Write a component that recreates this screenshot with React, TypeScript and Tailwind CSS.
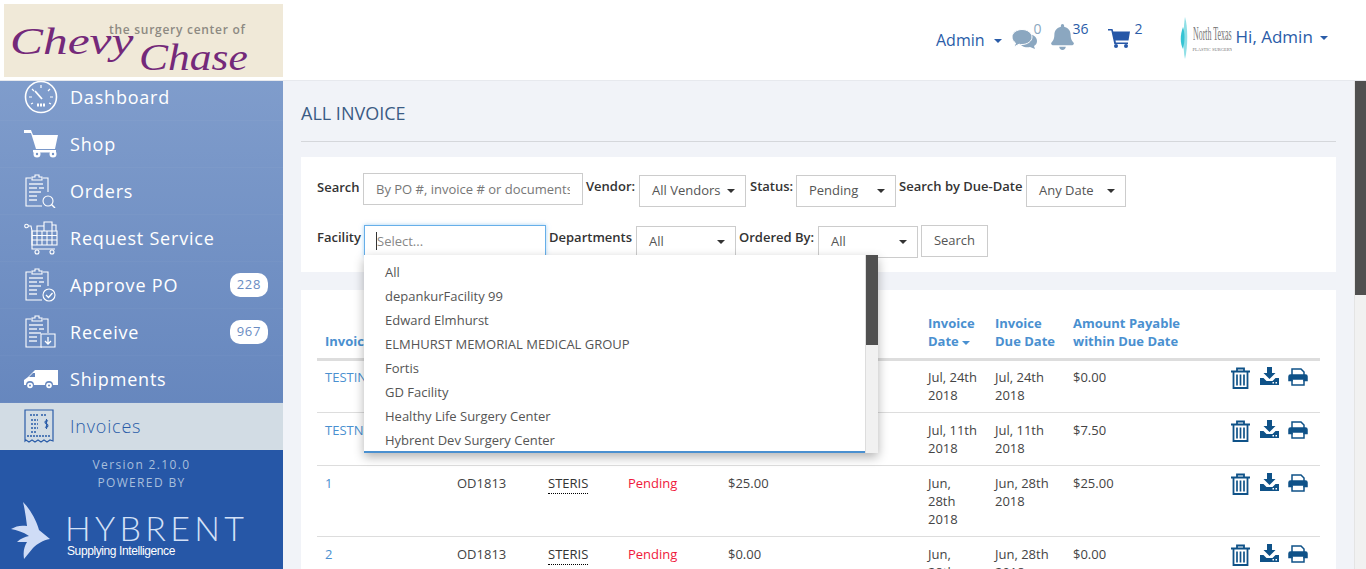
import React from 'react';
import { FaBell } from 'react-icons/fa';

const Caret = ({ className = 'border-t-[#333]' }: { className?: string }) => (
  <span className={`inline-block w-0 h-0 border-x-[4px] border-x-transparent border-t-[4px] ${className}`} />
);

const Clipboard = ({ children }: { children?: React.ReactNode }) => (
  <svg width="32" height="34" viewBox="0 0 32 34" fill="none" stroke="white" strokeWidth="1.1">
    <path d="M7 4H2v28h16M19 4h5v14" />
    <path d="M8 5V3h3V1h4v2h3v3H8z" />
    <path d="M5 10h14M5 14h8M15 14h5M5 18h12M5 22h8M5 26h8" strokeWidth="1.4" opacity="0.85" />
    {children}
  </svg>
);

const icons: Record<string, React.ReactNode> = {
  Dashboard: (
    <svg width="34" height="34" viewBox="0 0 34 34" fill="none" stroke="white">
      <circle cx="17" cy="17" r="15.5" strokeWidth="1.6" />
      <path d="M17 5v3M8 9l2 2M26 9l-2 2M5 17h3M26 17h3M7 24l2-1M27 24l-2-1" strokeWidth="1.2" />
      <path d="M11 11l7 8" strokeWidth="1.8" />
      <path d="M13 25h8" strokeWidth="3" strokeDasharray="2 1" />
    </svg>
  ),
  Shop: (
    <svg width="34" height="28" viewBox="0 0 34 28" fill="white">
      <path d="M0 0h7l2 5h25l-3 14H12L7 3H0z" />
      <path d="M9 20h23v2.500H9z" />
      <circle cx="13" cy="24" r="3.500" />
      <circle cx="29" cy="24" r="3.500" />
      <circle cx="13" cy="24" r="1.200" fill="#7394c7" />
      <circle cx="29" cy="24" r="1.200" fill="#7394c7" />
    </svg>
  ),
  Orders: (
    <Clipboard>
      <circle cx="24" cy="27" r="5" />
      <path d="M27.500 30.500L31 34" strokeWidth="1.4" />
    </Clipboard>
  ),
  'Request Service': (
    <svg width="34" height="34" viewBox="0 0 34 34" fill="none" stroke="white" strokeWidth="1.1">
      <circle cx="2.500" cy="5" r="1.800" />
      <path d="M4 5h3l1 5v18h23" />
      <path d="M8 10h25v14H8zM8 14.500h25M8 19h25M13 10v14M18 10v14M23 10v14M28 10v14" />
      <path d="M13 10V5h7v5M20 8V1h8v9M28 4h4v6" />
      <circle cx="13" cy="31" r="2" />
      <circle cx="28" cy="31" r="2" />
    </svg>
  ),
  'Approve PO': (
    <Clipboard>
      <circle cx="25" cy="27" r="6" fill="#6b8dc2" />
      <path d="M22 27l2.500 2.500 4-4.500" strokeWidth="1.3" />
    </Clipboard>
  ),
  Receive: (
    <Clipboard>
      <path d="M17 19h14v13H17z" fill="#6b8dc2" />
      <path d="M24 22v7M21 26l3 3 3-3" strokeWidth="1.3" />
    </Clipboard>
  ),
  Shipments: (
    <svg width="34" height="20" viewBox="0 0 34 20" fill="white">
      <path d="M11 1h23v15h-5a4 4 0 0 0-8 0H10a4 4 0 0 0-8 0H0v-5l4-3z" />
      <path d="M9 4h2v4H5z" fill="#6687bd" />
      <circle cx="6" cy="16.500" r="2.800" />
      <circle cx="25" cy="16.500" r="2.800" />
      <circle cx="6" cy="16.500" r="1" fill="#6687bd" />
      <circle cx="25" cy="16.500" r="1" fill="#6687bd" />
    </svg>
  ),
  Invoices: (
    <svg width="30" height="34" viewBox="0 0 30 34" fill="none" stroke="#2a5ca8" strokeWidth="1">
      <path d="M1 32V1h28v31l-3-1-3 2-3-2-3 2-3-2-3 2-3-2-3 2-3-2z" strokeWidth="1.200" />
      <path d="M6 6h8M17 6h6M7 11h7M7 15h7M7 19h7M7 23h5M3 27h24" strokeDasharray="2 1" strokeWidth="1.300" />
      <path d="M24 12c-3-1.500-4 2-1.500 3s1.500 4-1.500 3M22.500 10v10" strokeWidth="1.100" />
    </svg>
  ),
};

const menu = [
  { name: 'Dashboard' },
  { name: 'Shop' },
  { name: 'Orders' },
  { name: 'Request Service' },
  { name: 'Approve PO', badge: '228' },
  { name: 'Receive', badge: '967' },
  { name: 'Shipments' },
  { name: 'Invoices', active: true },
];

const facilities = [
  'All',
  'depankurFacility 99',
  'Edward Elmhurst',
  'ELMHURST MEMORIAL MEDICAL GROUP',
  'Fortis',
  'GD Facility',
  'Healthy Life Surgery Center',
  'Hybrent Dev Surgery Center',
];

const rows = [
  { id: 'TESTING', date: ['Jul, 24th', '2018'], due: ['Jul, 24th', '2018'], payable: '$0.00', h: 'h-[53px]', pad: 'pt-[7px]', iconPad: 'pt-[6px]' },
  { id: 'TESTNEW', date: ['Jul, 11th', '2018'], due: ['Jul, 11th', '2018'], payable: '$7.50', h: 'h-[53px]', pad: 'pt-[8px]', iconPad: 'pt-[7px]' },
  { id: '1', po: 'OD1813', vendor: 'STERIS', status: 'Pending', amount: '$25.00', date: ['Jun,', '28th', '2018'], due: ['Jun, 28th', '2018'], payable: '$25.00', h: 'h-[71px]', pad: 'pt-[8px]', iconPad: 'pt-[7px]' },
  { id: '2', po: 'OD1813', vendor: 'STERIS', status: 'Pending', amount: '$0.00', date: ['Jun,', '28th', '2018'], due: ['Jun, 28th', '2018'], payable: '$0.00', h: 'h-[71px]', pad: 'pt-[8px]', iconPad: 'pt-[7px]' },
];

const TrashIcon = () => (
  <svg width="19" height="22" viewBox="0 0 19 22" fill="none" stroke="#0f5288" strokeWidth="1.800">
    <path d="M0 4.500h19M6 4V1.500h7V4M2.500 5v16h14V5" />
    <path d="M6 7.500v11M9.500 7.500v11M13 7.500v11" strokeWidth="1.700" />
  </svg>
);

const DownloadIcon = () => (
  <svg width="19" height="18" viewBox="0 0 19 18" fill="#0f5288">
    <path d="M7 0h5v6h3.500L9.500 12 3.500 6H7z" />
    <path d="M0 11h3.500l3 3h6l3-3H19v7H0z" />
    <rect x="12.500" y="15" width="1.500" height="1.500" fill="white" />
    <rect x="15.500" y="15" width="1.500" height="1.500" fill="white" />
  </svg>
);

const PrintIcon = () => (
  <svg width="20" height="18" viewBox="0 0 20 18" fill="none" stroke="#0f5288" strokeWidth="1.500" className="mt-[1px]">
    <path d="M4 7V1h9l3 3v3" />
    <path d="M4 12v5h12v-5" />
    <path d="M2.500 7h15A1.500 1.500 0 0 1 19 8.500V12.500h-3v-1.500H4v1.500H1V8.500A1.500 1.500 0 0 1 2.500 7z" fill="#0f5288" />
  </svg>
);

const CommentsIcon = () => (
  <svg width="25" height="20" viewBox="0 0 25 20" fill="#8ba7c0">
    <path d="M16 5c5 0 9 3 9 7 0 2-1 4-3 5l1 3-5-2c-5 1-10-1-11-5z" />
    <path d="M10 0.500c5.500 0 10 3.300 10 7.500s-4.500 7.500-10 7.500c-1 0-2 0-3-0.300L2 18l1.500-4C1.500 12.500 0 10.500 0 8 0 3.800 4.500 0.500 10 0.500z" stroke="white" strokeWidth="1" />
  </svg>
);

const CartIcon = () => (
  <svg width="22" height="19" viewBox="0 0 22 19" fill="#2657a7">
    <path d="M0 0h4.500l.8 2.500H22l-1.500 9H7.500l.4 2H20v1.500H6.300L3.300 1.500H0z" />
    <circle cx="8" cy="17" r="2" />
    <circle cx="18" cy="17" r="2" />
  </svg>
);

const Select = ({ label, width }: { label: string; width: string }) => (
  <div className={`${width} h-[32px] border border-[#ccc] flex items-center justify-between pl-[12px] pr-[10px] text-[13px] text-[#555] bg-white whitespace-nowrap`}>
    <span>{label}</span>
    <Caret />
  </div>
);

const App = () => {
  return (
    <div className="w-[1366px] h-[569px] overflow-hidden flex flex-col bg-white text-[13px] text-[#444]" style={{ fontFamily: '"Open Sans", sans-serif' }}>
      <header className="h-[81px] shrink-0 flex items-stretch bg-white border-b border-[#e7e9ee] relative z-10">
        <div className="w-[283px] pl-[4px] pt-[4px]">
          <div className="relative w-[279px] h-[73px] bg-[#f0e9d8] overflow-hidden" style={{ fontFamily: '"Liberation Serif", serif' }}>
            <span className="absolute left-[105px] top-[19px] text-[12px] font-semibold tracking-[0.72px] text-[#8d8a82] leading-[14px] whitespace-nowrap" style={{ fontFamily: '"Open Sans", sans-serif' }}>the surgery center of</span>
            <span className="absolute left-[6px] top-[20px] text-[38px] italic text-[#74297a] leading-[34px] origin-left scale-x-[1.3]">Chevy</span>
            <span className="absolute left-[135px] top-[36px] text-[38px] italic text-[#74297a] leading-[34px] origin-left scale-x-[1.145]">Chase</span>
          </div>
        </div>
        <div className="flex-1 flex items-start text-[#2a5ca8] pl-[653px]">
          <div className="mt-[29px] text-[16px] flex items-center gap-[9px] leading-[22px]">
            Admin <Caret className="border-t-[#2a5ca8] mt-[2px]" />
          </div>
          <div className="relative ml-[10px] mt-[29px]">
            <CommentsIcon />
            <span className="absolute left-[22px] -top-[11px] text-[14px] text-[#8ba7c0]">0</span>
          </div>
          <div className="relative ml-[14px] mt-[24px]">
            <FaBell className="text-[#8ba7c0] w-[23px] h-[26px]" />
            <span className="absolute left-[22px] -top-[6px] text-[14px]">36</span>
          </div>
          <div className="relative ml-[34px] mt-[29px]">
            <CartIcon />
            <span className="absolute left-[27px] -top-[11px] text-[14px]">2</span>
          </div>
          <div className="ml-[50px] mt-[17px] w-[52px] h-[42px] flex items-center gap-[4px] overflow-hidden">
            <svg width="9" height="42" viewBox="0 0 9 42" className="shrink-0">
              <path d="M5 0c3 10 3 30 0 42-2-8-2-30 0-42z" fill="#8fdfe6" />
              <path d="M3 10c2 6 2 14 0 22C0 26 0 18 3 10z" fill="#35c4d4" />
            </svg>
            <div className="w-[39px] text-[#777]" style={{ fontFamily: '"Liberation Serif", serif' }}>
              <div className="text-[18px] leading-[22px] whitespace-nowrap origin-left scale-x-[0.44]">North Texas</div>
              <div className="text-[4.500px] leading-[9px] whitespace-nowrap">PLASTIC SURGERY</div>
            </div>
          </div>
          <div className="ml-[4px] mt-[25px] text-[17px] flex items-center gap-[7px] leading-[24px]">
            Hi, Admin <Caret className="border-t-[#2a5ca8] mt-[2px]" />
          </div>
        </div>
      </header>

      <div className="flex-1 flex min-h-0">
        <aside className="w-[283px] shrink-0 flex flex-col overflow-hidden bg-[#2657a7]">
          <nav className="-mt-[7px] bg-gradient-to-b from-[#809dcc] to-[#6384bc]">
            {menu.map((item) => (
              <div key={item.name} className={`h-[47px] flex items-center ${item.active ? 'bg-[#d2dce4] text-[#2a5ca8] font-light' : 'text-white'} border-b border-white/[0.03]`}>
                <div className="w-[70px] pl-[24px] flex justify-start">{icons[item.name]}</div>
                <span className="flex-1 text-[18px] tracking-[0.8px] leading-none">{item.name}</span>
                {item.badge && (
                  <span className="mr-[15px] w-[38px] h-[24px] rounded-[10px] bg-white text-[#6a8cc2] text-[13px] tracking-[0.8px] flex items-center justify-center">{item.badge}</span>
                )}
              </div>
            ))}
          </nav>
          <div className="flex-1 flex flex-col items-center pt-[6px] text-[#a8bfdc] text-[12px] tracking-[1.35px] leading-[18px]">
            <div>Version 2.10.0</div>
            <div>POWERED BY</div>
            <div className="w-full flex items-start pl-[11px] pt-[10px] text-[#d4e1f7]">
              <svg width="40" height="58" viewBox="0 0 40 58" className="shrink-0">
                <path d="M12 0C20 8 26 20 28 28L39 37C32 38 26 42 22 46L13 57C12 50 13 45 16 40L6 40C10 36 14 35 18 34 12 30 6 28 0 27 5 24 10 23 16 24 15 16 14 8 12 0Z" fill="#cfdcf6" />
              </svg>
              <div className="ml-[16px] mt-[9px]">
                <div className="text-[34px] font-light leading-[34px] tracking-[4.300px] -ml-[2px] whitespace-nowrap" style={{ fontFamily: 'Lato, sans-serif' }}>HYBRENT</div>
                <div className="text-[12px] leading-[12px] -tracking-[0.4px] text-white whitespace-nowrap" style={{ fontFamily: '"Liberation Sans", sans-serif' }}>Supplying Intelligence</div>
              </div>
            </div>
          </div>
        </aside>

        <main className="flex-1 min-w-0 bg-[#f1f3f8] pl-[18px] pr-[18px] overflow-hidden">
          <h1 className="h-[61px] pt-[20px] border-b border-[#d5d7db] text-[18px] leading-[25px] text-[#3b5b84]">ALL INVOICE</h1>

          <section className="mt-[15px] h-[115px] bg-white px-[16px] pt-[16px] relative z-20">
            <div className="flex items-start text-[#333]">
              <label className="w-[46px] font-semibold leading-[28px]">Search</label>
              <div className="w-[220px] h-[32px] border border-[#ccc] px-[12px] text-[#777] leading-[30px]">
                <div className="overflow-hidden whitespace-nowrap">By PO #, invoice # or documents</div>
              </div>
              <label className="ml-[3px] w-[53px] font-semibold leading-[26px]">Vendor:</label>
              <div className="mt-[2px]"><Select label="All Vendors" width="w-[107px]" /></div>
              <label className="ml-[4px] w-[46px] font-semibold leading-[26px]">Status:</label>
              <div className="mt-[2px]"><Select label="Pending" width="w-[100px]" /></div>
              <label className="ml-[3px] w-[127px] font-semibold leading-[26px] whitespace-nowrap">Search by Due-Date</label>
              <div className="mt-[2px]"><Select label="Any Date" width="w-[100px]" /></div>
            </div>
            <div className="flex items-start mt-[18px] text-[#333]">
              <label className="w-[47px] font-semibold leading-[24px]">Facility</label>
              <div className="relative w-[182px] h-[32px] border border-[#66afe9] shadow-[0_0_4px_rgba(102,175,233,0.6)] bg-white pl-[12px] leading-[30px] text-[#888]">
                <span className="border-l border-[#333] -ml-px">Select...</span>
                <ul className="absolute left-[-1px] top-[29px] w-[514px] h-[198px] flex bg-white shadow-[0_4px_10px_rgba(0,0,0,0.3)] text-[#555] overflow-hidden">
                  <div className="flex-1 border-b-2 border-[#4a90d0] pt-[5px] pl-[21px]">
                    {facilities.map((name) => (
                      <li key={name} className="h-[24px] leading-[24px] whitespace-nowrap">{name}</li>
                    ))}
                  </div>
                  <div className="w-[13px] bg-[#f1f1f1] border-l border-[#ddd]">
                    <div className="h-[90px] bg-[#505050]" />
                  </div>
                </ul>
              </div>
              <label className="ml-[3px] w-[87px] font-semibold leading-[24px]">Departments</label>
              <div className="mt-[1px]"><Select label="All" width="w-[100px]" /></div>
              <label className="ml-[3px] w-[79px] font-semibold leading-[24px]">Ordered By:</label>
              <div className="mt-[1px]"><Select label="All" width="w-[100px]" /></div>
              <button className="ml-[3px] w-[67px] h-[32px] border border-[#ccc] text-[#555] bg-white">Search</button>
            </div>
          </section>

          <section className="mt-[18px] bg-white px-[16px] pt-[24px] h-[400px]">
            <table className="w-[1003px] table-fixed border-collapse">
              <colgroup>
                <col className="w-[132px]" />
                <col className="w-[91px]" />
                <col className="w-[80px]" />
                <col className="w-[100px]" />
                <col className="w-[200px]" />
                <col className="w-[67px]" />
                <col className="w-[78px]" />
                <col className="w-[157px]" />
                <col className="w-[98px]" />
              </colgroup>
              <thead>
                <tr className="h-[45px] border-b-[3px] border-[#dddddd] text-[#4a90d0] text-left font-bold leading-[18px] align-top">
                  <th className="pl-[8px] pt-[18px]" colSpan={5}>Invoice #</th>
                  <th className="pl-[8px]">Invoice<br />Date <Caret className="border-t-[#4a90d0] align-middle" /></th>
                  <th className="pl-[8px]">Invoice<br />Due Date</th>
                  <th className="pl-[8px]" colSpan={2}>Amount Payable<br />within Due Date</th>
                </tr>
              </thead>
              <tbody>
                {rows.map((row) => (
                  <tr key={row.id} className={`${row.h} border-b border-[#dddddd] align-top leading-[18px] text-[#444]`}>
                    <td className={`pl-[8px] ${row.pad} text-[#4a90d0]`}>{row.id}</td>
                    <td className={`pl-[8px] ${row.pad}`}>{row.po}</td>
                    <td className={`pl-[8px] ${row.pad}`}>
                      {row.vendor && <span className="text-[#333] border-b border-dotted border-black pb-px">{row.vendor}</span>}
                    </td>
                    <td className={`pl-[8px] ${row.pad} text-[#f0183c]`}>{row.status}</td>
                    <td className={`pl-[8px] ${row.pad}`}>{row.amount}</td>
                    <td className={`pl-[8px] ${row.pad}`}>{row.date.map((line) => <div key={line}>{line}</div>)}</td>
                    <td className={`pl-[8px] ${row.pad}`}>{row.due.map((line) => <div key={line}>{line}</div>)}</td>
                    <td className={`pl-[8px] ${row.pad}`}>{row.payable}</td>
                    <td className={`pl-[9px] ${row.iconPad}`}>
                      <div className="flex items-start gap-[9.500px]">
                        <TrashIcon />
                        <DownloadIcon />
                        <PrintIcon />
                      </div>
                    </td>
                  </tr>
                ))}
              </tbody>
            </table>
          </section>
        </main>

        <div className="w-[12px] shrink-0 bg-[#f1f1f1] border-l border-[#e4e4e4]">
          <div className="h-[214px] bg-[#505050]" />
        </div>
      </div>
    </div>
  );
};

export default App;
